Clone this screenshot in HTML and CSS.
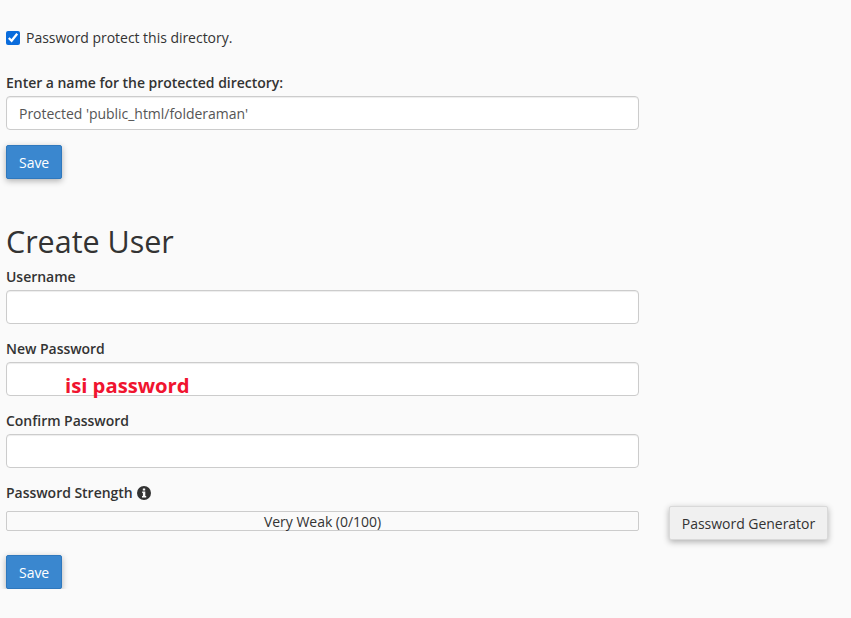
FILE: index.html
```html
<!DOCTYPE html>
<html lang="en">
<head>
    <meta charset="UTF-8">
    <meta name="viewport" content="width=device-width, initial-scale=1.0">
    <title>Password Protect Directory</title>
    <link rel="stylesheet" href="styles.css">
</head>
<body>
    <main class="container">
        <form class="protect-form">
            <div class="checkbox-row">
                <input type="checkbox" id="protect" class="checkbox" checked>
                <label for="protect">Password protect this directory.</label>
            </div>
            <div class="form-group">
                <label class="field-label" for="dirname">Enter a name for the protected directory:</label>
                <input type="text" id="dirname" class="form-control" value="Protected 'public_html/folderaman'">
            </div>
            <button type="button" class="btn btn-primary">Save</button>
        </form>

        <form class="user-form">
            <h1>Create User</h1>
            <div class="form-group">
                <label class="field-label" for="username">Username</label>
                <input type="text" id="username" class="form-control">
            </div>
            <div class="form-group password-group">
                <label class="field-label" for="password">New Password</label>
                <input type="text" id="password" class="form-control">
                <span class="annotation">isi password</span>
            </div>
            <div class="form-group">
                <label class="field-label" for="confirm">Confirm Password</label>
                <input type="text" id="confirm" class="form-control">
            </div>
            <div class="strength-label">
                <span class="field-label">Password Strength</span>
                <svg class="info-icon" viewBox="0 0 14 14" width="14" height="14" aria-hidden="true">
                    <circle cx="7" cy="7" r="7" fill="#333"/>
                    <rect x="5.8" y="2.4" width="2.4" height="2.2" rx="0.4" fill="#fafafa"/>
                    <path d="M5.2 5.6h3.1v4.5h0.9v1.4H5v-1.4h0.9V7H5.2z" fill="#fafafa"/>
                </svg>
            </div>
            <div class="strength-row">
                <div class="strength-bar">Very Weak (0/100)</div>
                <button type="button" class="btn btn-default">Password Generator</button>
            </div>
            <button type="button" class="btn btn-primary">Save</button>
        </form>
    </main>
</body>
</html>
```

FILE: styles.css
```css
* {
    margin: 0;
    padding: 0;
    box-sizing: border-box;
}
body {
    font-family: 'Open Sans', sans-serif;
    font-size: 14px;
    line-height: 20px;
    letter-spacing: -0.03px;
    background-color: #fafafa;
    color: #333;
}
.container {
    padding: 28px 6px 0;
}
.checkbox-row {
    display: flex;
    align-items: center;
    gap: 6px;
    margin-bottom: 25px;
}
.checkbox {
    width: 14px;
    height: 14px;
    margin: 0;
    accent-color: #0a6cdc;
}
.field-label {
    display: block;
    font-weight: 600;
    margin-bottom: 3px;
}
.form-group {
    margin-bottom: 15px;
    width: 633px;
}
.form-control {
    display: block;
    width: 100%;
    height: 34px;
    padding: 6px 12px;
    font-family: inherit;
    font-size: 14px;
    letter-spacing: inherit;
    color: #555;
    background-color: #fff;
    border: 1px solid #ccc;
    border-radius: 4px;
    box-shadow: inset 0 1px 1px rgba(0,0,0,0.075);
}
.btn {
    display: block;
    height: 34px;
    padding: 7px 12px 5px;
    font-family: inherit;
    font-size: 14px;
    line-height: 20px;
    letter-spacing: inherit;
    border-radius: 2px;
    border: 1px solid transparent;
    box-shadow: 0 2px 6px rgba(0,0,0,0.3);
    cursor: pointer;
}
.btn-primary {
    background-color: #3a87cf;
    border-color: #2f78bd;
    color: #fff;
}
.btn-default {
    width: 159px;
    padding-left: 0;
    padding-right: 0;
    white-space: nowrap;
    background-color: #f0f0f0;
    border-color: #d9d9d9;
    color: #333;
    flex-shrink: 0;
}
.user-form {
    margin-top: 44px;
}
h1 {
    font-size: 30.5px;
    font-weight: 400;
    line-height: 36px;
    margin-bottom: 8px;
}
.password-group {
    position: relative;
}
.annotation {
    position: absolute;
    left: 59px;
    top: 32px;
    font-size: 20.3px;
    line-height: 28px;
    font-weight: 700;
    color: #f0142f;
}
.strength-label {
    display: flex;
    align-items: center;
    gap: 4px;
    height: 20px;
}
.strength-label .field-label {
    margin-bottom: 0;
}
.strength-row {
    display: flex;
    align-items: flex-start;
    gap: 30px;
    margin-top: 3px;
    margin-bottom: 15px;
    height: 34px;
}
.strength-bar {
    width: 633px;
    height: 20px;
    margin-top: 5px;
    border: 1px solid #ccc;
    border-radius: 2px;
    line-height: 20px;
    text-align: center;
    background-color: #fafafa;
}
```
